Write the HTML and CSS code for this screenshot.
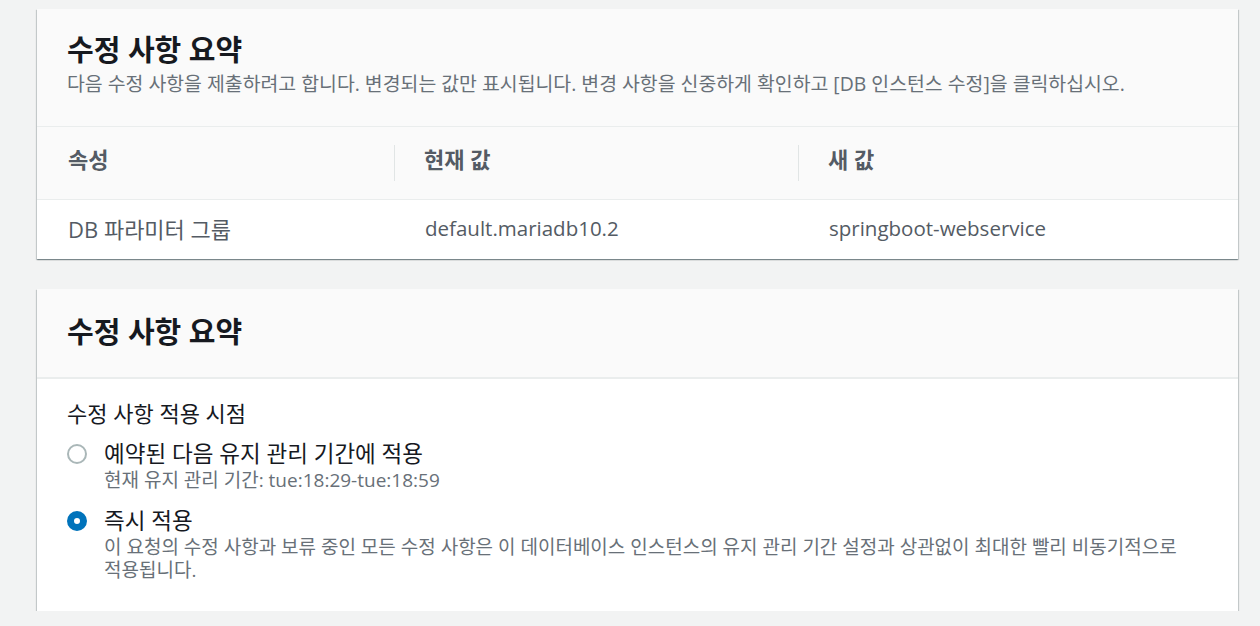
FILE: index.html
```html
<!DOCTYPE html>
<html lang="ko">
<head>
<meta charset="utf-8">
<link rel="stylesheet" href="styles.css">
</head>
<body>
<main class="page">
  <section class="card">
    <header class="card-header">
      <h2 class="card-title">수정 사항 요약</h2>
      <p class="card-desc">다음 수정 사항을 제출하려고 합니다. 변경되는 값만 표시됩니다. 변경 사항을 신중하게 확인하고 [DB 인스턴스 수정]을 클릭하십시오.</p>
    </header>
    <div class="table">
      <div class="row head">
        <div class="cell">속성</div>
        <div class="cell sep">현재 값</div>
        <div class="cell sep">새 값</div>
      </div>
      <div class="row body">
        <div class="cell">DB 파라미터 그룹</div>
        <div class="cell value">default.mariadb10.2</div>
        <div class="cell value">springboot-webservice</div>
      </div>
    </div>
  </section>

  <section class="card">
    <header class="card-header compact">
      <h2 class="card-title">수정 사항 요약</h2>
    </header>
    <div class="card-body">
      <div class="field-label">수정 사항 적용 시점</div>
      <div class="radio-list">
        <label class="radio">
          <span class="radio-dot"></span>
          <span class="radio-text">
            <span class="radio-label">예약된 다음 유지 관리 기간에 적용</span>
            <span class="radio-desc">현재 유지 관리 기간: tue:18:29-tue:18:59</span>
          </span>
        </label>
        <label class="radio">
          <span class="radio-dot checked"></span>
          <span class="radio-text">
            <span class="radio-label">즉시 적용</span>
            <span class="radio-desc">이 요청의 수정 사항과 보류 중인 모든 수정 사항은 이 데이터베이스 인스턴스의 유지 관리 기간 설정과 상관없이 최대한 빨리 비동기적으로 적용됩니다.</span>
          </span>
        </label>
      </div>
    </div>
  </section>
</main>
</body>
</html>
```

FILE: styles.css
```css
* { box-sizing: border-box; }

html, body {
  margin: 0;
  padding: 0;
  background: #f2f3f3;
}

body {
  font-family: "Open Sans", "Noto Sans CJK KR", sans-serif;
  color: #16191f;
  word-break: keep-all;
}

.page {
  width: 1201px;
  margin-left: 37px;
  padding-top: 9px;
  display: flex;
  flex-direction: column;
  gap: 30px;
}

.card {
  background: #ffffff;
  box-shadow: 0 1px 1px 0 rgba(0, 28, 36, 0.3),
              1px 1px 1px 0 rgba(0, 28, 36, 0.15),
              -1px 1px 1px 0 rgba(0, 28, 36, 0.15);
}

.card-header {
  background: #fafafa;
  padding: 23px 30px 29px;
  border-bottom: 1px solid #eaeded;
}

.card-header.compact {
  padding: 25px 30px 27px;
  border-bottom: 2px solid #eaeded;
}

.card-title {
  margin: 0;
  font-size: 29px;
  line-height: 36px;
  font-weight: 700;
  color: #16191f;
}

.card-desc {
  margin: 3px 0 0;
  font-size: 19.4px;
  line-height: 26px;
  color: #687078;
}

.row {
  display: grid;
  grid-template-columns: 357px 404px 1fr;
}

.row.head {
  background: #fafafa;
  padding: 18px 0;
  border-bottom: 1px solid #eaeded;
}

.row.head .cell {
  height: 36px;
  display: flex;
  align-items: center;
  font-size: 22px;
  font-weight: 700;
  color: #545b64;
  padding-left: 31px;
  padding-bottom: 10px;
}

.row.head .cell.sep {
  border-left: 1px solid #e1e5e5;
  padding-left: 29px;
}

.row.body .cell {
  height: 59px;
  display: flex;
  align-items: center;
  font-size: 22px;
  color: #545b64;
  padding-left: 31px;
  padding-bottom: 4px;
}

.row.body .cell.value {
  font-size: 20.5px;
}

.card-body {
  padding: 20px 30px 29px;
}

.field-label {
  font-size: 22px;
  line-height: 28px;
  color: #16191f;
}

.radio-list {
  margin-top: 13px;
  display: flex;
  flex-direction: column;
  gap: 15px;
}

.radio {
  display: flex;
  align-items: flex-start;
  gap: 17px;
}

.radio-dot {
  flex: none;
  width: 20px;
  height: 20px;
  margin-top: 4px;
  border-radius: 50%;
  border: 2px solid #aab7b8;
  background: #ffffff;
}

.radio-dot.checked {
  border: 7px solid #0073bb;
}

.radio-text {
  display: flex;
  flex-direction: column;
}

.radio-label {
  font-size: 22.5px;
  line-height: 28px;
  color: #16191f;
}

.radio-desc {
  margin-top: 1px;
  font-size: 19px;
  line-height: 23px;
  color: #687078;
}
```
